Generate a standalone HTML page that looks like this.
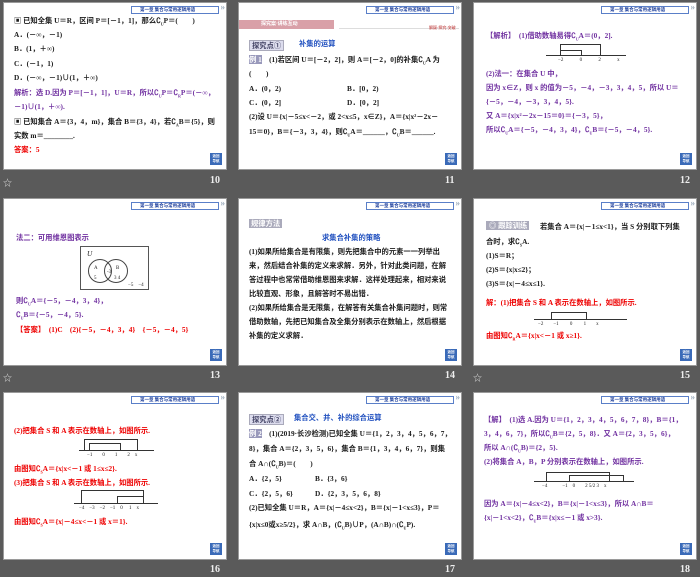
<!DOCTYPE html>
<html><head><meta charset="utf-8">
<style>
*{margin:0;padding:0;box-sizing:border-box}
body{width:700px;height:577px;background:#5a5a5a;position:relative;overflow:hidden;font-family:"Liberation Serif","Noto Sans CJK SC",serif}
.s{position:absolute;width:224px;height:168px;background:#fff;border:1px solid #9a9a9a;overflow:hidden}
.s div{position:absolute;white-space:nowrap;font-size:7.3px;font-weight:bold;color:#1a1a1a;line-height:9px}
.s sub{font-size:4px;line-height:0}
.hd{right:7px;top:3px;width:88px;height:8px;border:1px solid #5a7fc8;background:#fff;font-size:4.5px!important;color:#1a3c9a!important;line-height:6px!important;padding-left:8px}
.hd:after{content:"»";position:absolute;right:-7px;top:-3px;color:#9ab;font-size:9px}
.bt{right:4px;bottom:4px;width:12px;height:12px;background:#3a6ab8;color:#fff!important;font-size:3.5px!important;line-height:5px!important;text-align:center;padding-top:1px}
.p{color:#7030a0!important}.r{color:#e00!important}.b{color:#1f4fbf!important}
.n{position:absolute;color:#eee;font-weight:bold;font-size:10px;font-family:"Liberation Serif",serif}
.st{position:absolute;color:#ddd;font-size:9px}
.ax{position:absolute;border-top:1px solid #333}
.bx{position:absolute;border:1px solid #333;border-bottom:none}
.sm{font-size:5px!important;font-weight:normal!important}
</style></head><body>

<!-- slide 10 -->
<div class="s" style="left:3px;top:2px">
<div class="hd">第一章 集合与常用逻辑用语</div>
<div style="left:10px;top:13px">▣ 已知全集 U＝R，区间 P＝[－1，1]，那么∁<sub>U</sub>P＝(　　)</div>
<div style="left:10px;top:27px">A．(－∞，－1)</div>
<div style="left:10px;top:41px">B．(1，＋∞)</div>
<div style="left:10px;top:56px">C．(－1，1)</div>
<div style="left:10px;top:70px">D．(－∞，－1)∪(1，＋∞)</div>
<div class="p" style="left:10px;top:85px">解析：选 D.因为 P＝[－1，1]，U＝R，所以∁<sub>U</sub>P＝∁<sub>R</sub>P＝(－∞，</div>
<div class="p" style="left:10px;top:99px">－1)∪(1，＋∞).</div>
<div style="left:10px;top:114px">▣ 已知集合 A＝{3，4，m}，集合 B＝{3，4}，若∁<sub>A</sub>B＝{5}，则</div>
<div style="left:10px;top:128px">实数 m＝________.</div>
<div class="r" style="left:10px;top:142px">答案：5</div>
<div class="bt">返回<br>导航</div>
</div>
<span class="st" style="left:3px;top:176px">☆</span><span class="n" style="left:210px;top:175px">10</span>

<!-- slide 11 -->
<div class="s" style="left:238px;top:2px">
<div class="hd">第一章 集合与常用逻辑用语</div>
<div style="left:0;top:17px;width:95px;height:9px;background:#d9a0a8;color:#fff;padding-left:22px;font-size:5px;line-height:9px">探究案·讲练互动</div>
<div style="left:100px;top:25px;width:120px;border-top:1px solid #ddd;height:1px"></div>
<div style="left:190px;top:20px;font-size:4px;color:#c66">解疑·探究·突破</div>
<div style="left:10px;top:37px;background:#dde;padding:0 2px;border:1px solid #aab;color:#446">探究点①</div>
<div class="b" style="left:60px;top:36px">补集的运算</div>
<div style="left:10px;top:52px"><span style="background:#99b;color:#fff">例 1</span>　(1)若区间 U＝[－2，2]，则 A＝[－2，0]的补集∁<sub>U</sub>A 为</div>
<div style="left:10px;top:66px">(　　)</div>
<div style="left:10px;top:81px">A．(0，2)</div><div style="left:108px;top:81px">B．[0，2)</div>
<div style="left:10px;top:95px">C．(0，2]</div><div style="left:108px;top:95px">D．[0，2]</div>
<div style="left:10px;top:109px">(2)设 U＝{x|－5≤x&lt;－2，或 2&lt;x≤5，x∈Z}，A＝{x|x²－2x－</div>
<div style="left:10px;top:124px">15＝0}，B＝{－3，3，4}，则∁<sub>U</sub>A＝______，∁<sub>U</sub>B＝______.</div>
<div class="bt">返回<br>导航</div>
</div>
<span class="n" style="left:445px;top:175px">11</span>

<!-- slide 12 -->
<div class="s" style="left:473px;top:2px">
<div class="hd">第一章 集合与常用逻辑用语</div>
<div class="p" style="left:12px;top:28px">【解析】　(1)借助数轴易得∁<sub>U</sub>A＝(0，2].</div>
<div class="bx" style="left:86px;top:41px;width:41px;height:11px"></div>
<div class="bx" style="left:86px;top:47px;width:22px;height:5px"></div>
<div class="ax" style="left:72px;top:52px;width:80px"></div>
<div class="sm" style="left:84px;top:53px">−2　　　 0　　　 2　　　 x</div>
<div class="p" style="left:12px;top:66px">(2)法一：在集合 U 中，</div>
<div class="p" style="left:12px;top:80px">因为 x∈Z，则 x 的值为－5，－4，－3，3，4，5，所以 U＝</div>
<div class="p" style="left:12px;top:94px">{－5，－4，－3，3，4，5}.</div>
<div class="p" style="left:12px;top:108px">又 A＝{x|x²－2x－15＝0}＝{－3，5}，</div>
<div class="p" style="left:12px;top:122px">所以∁<sub>U</sub>A＝{－5，－4，3，4}，∁<sub>U</sub>B＝{－5，－4，5}.</div>
<div class="bt">返回<br>导航</div>
</div>
<span class="n" style="left:680px;top:175px">12</span>

<!-- slide 13 -->
<div class="s" style="left:3px;top:198px">
<div class="hd">第一章 集合与常用逻辑用语</div>
<div class="p" style="left:12px;top:34px">法二：可用维恩图表示</div>
<div style="left:76px;top:47px;width:69px;height:44px;border:1px solid #555;background:#fff"></div>
<div style="left:83px;top:50px;font-style:italic;font-weight:normal">U</div>
<div style="left:84px;top:60px;width:24px;height:24px;border:1px solid #444;border-radius:50%"></div>
<div style="left:100px;top:60px;width:24px;height:24px;border:1px solid #444;border-radius:50%"></div>
<div class="sm" style="left:90px;top:65px">A</div><div class="sm" style="left:112px;top:65px">B</div>
<div class="sm" style="left:90px;top:75px">5</div><div class="sm" style="left:103px;top:69px">-3</div><div class="sm" style="left:110px;top:75px">3 4</div>
<div class="sm" style="left:124px;top:82px">−5　−4</div>
<div class="p" style="left:12px;top:97px">则∁<sub>U</sub>A＝{－5，－4，3，4}，</div>
<div class="p" style="left:12px;top:111px">∁<sub>U</sub>B＝{－5，－4，5}.</div>
<div class="r" style="left:12px;top:126px">【答案】　(1)C　(2){－5，－4，3，4}　{－5，－4，5}</div>
<div class="bt">返回<br>导航</div>
</div>
<span class="st" style="left:3px;top:371px">☆</span><span class="n" style="left:210px;top:370px">13</span>

<!-- slide 14 -->
<div class="s" style="left:238px;top:198px">
<div class="hd">第一章 集合与常用逻辑用语</div>
<div style="left:10px;top:20px;background:#aab;color:#fff;padding:0 2px">规律方法</div>
<div class="b" style="left:83px;top:34px">求集合补集的策略</div>
<div style="left:10px;top:48px">(1)如果所给集合是有限集，则先把集合中的元素一一列举出</div>
<div style="left:10px;top:62px">来，然后结合补集的定义来求解．另外，针对此类问题，在解</div>
<div style="left:10px;top:76px">答过程中也常常借助维恩图来求解．这样处理起来，相对来说</div>
<div style="left:10px;top:90px">比较直观、形象，且解答时不易出错．</div>
<div style="left:10px;top:104px">(2)如果所给集合是无限集，在解答有关集合补集问题时，则常</div>
<div style="left:10px;top:118px">借助数轴，先把已知集合及全集分别表示在数轴上，然后根据</div>
<div style="left:10px;top:132px">补集的定义求解．</div>
<div class="bt">返回<br>导航</div>
</div>
<span class="n" style="left:445px;top:370px">14</span>

<!-- slide 15 -->
<div class="s" style="left:473px;top:198px">
<div class="hd">第一章 集合与常用逻辑用语</div>
<div style="left:12px;top:22px;background:#aab;color:#fff;padding:0 3px;width:43px">◎ 跟踪训练</div>
<div style="left:66px;top:23px">若集合 A＝{x|－1≤x&lt;1}，当 S 分别取下列集</div>
<div style="left:12px;top:38px">合时，求∁<sub>S</sub>A.</div>
<div style="left:12px;top:52px">(1)S＝R；</div>
<div style="left:12px;top:66px">(2)S＝{x|x≤2}；</div>
<div style="left:12px;top:80px">(3)S＝{x|－4≤x≤1}.</div>
<div class="r" style="left:12px;top:99px">解：(1)把集合 S 和 A 表示在数轴上，如图所示.</div>
<div class="bx" style="left:77px;top:113px;width:36px;height:7px"></div>
<div class="ax" style="left:60px;top:120px;width:93px"></div>
<div class="sm" style="left:64px;top:121px">−2　　−1　　 0　　 1　　x</div>
<div class="r" style="left:12px;top:132px">由图知∁<sub>R</sub>A＝{x|x&lt;－1 或 x≥1}.</div>
<div class="bt">返回<br>导航</div>
</div>
<span class="st" style="left:473px;top:371px">☆</span><span class="n" style="left:680px;top:370px">15</span>

<!-- slide 16 -->
<div class="s" style="left:3px;top:392px">
<div class="hd">第一章 集合与常用逻辑用语</div>
<div class="r" style="left:10px;top:33px">(2)把集合 S 和 A 表示在数轴上，如图所示.</div>
<div class="bx" style="left:80px;top:46px;width:54px;height:11px"></div>
<div class="bx" style="left:85px;top:50px;width:32px;height:7px"></div>
<div class="ax" style="left:75px;top:57px;width:75px"></div>
<div class="sm" style="left:83px;top:58px">−1　　0　　1　　2　x</div>
<div class="r" style="left:10px;top:71px">由图知∁<sub>S</sub>A＝{x|x&lt;－1 或 1≤x≤2}.</div>
<div class="r" style="left:10px;top:85px">(3)把集合 S 和 A 表示在数轴上，如图所示.</div>
<div class="bx" style="left:77px;top:97px;width:63px;height:13px"></div>
<div class="bx" style="left:113px;top:103px;width:27px;height:7px"></div>
<div class="ax" style="left:70px;top:110px;width:84px"></div>
<div class="sm" style="left:75px;top:111px">−4　−3　−2　−1　0　 1　x</div>
<div class="r" style="left:10px;top:124px">由图知∁<sub>S</sub>A＝{x|－4≤x&lt;－1 或 x＝1}.</div>
<div class="bt">返回<br>导航</div>
</div>
<span class="n" style="left:210px;top:564px">16</span>

<!-- slide 17 -->
<div class="s" style="left:238px;top:392px">
<div class="hd">第一章 集合与常用逻辑用语</div>
<div style="left:10px;top:21px;background:#dde;padding:0 2px;border:1px solid #aab;color:#446">探究点②</div>
<div class="b" style="left:55px;top:20px">集合交、并、补的综合运算</div>
<div style="left:10px;top:36px"><span style="background:#99b;color:#fff">例 2</span>　(1)(2019·长沙检测)已知全集 U＝{1，2，3，4，5，6，7，</div>
<div style="left:10px;top:51px">8}，集合 A＝{2，3，5，6}，集合 B＝{1，3，4，6，7}，则集</div>
<div style="left:10px;top:66px">合 A∩(∁<sub>U</sub>B)＝(　　)</div>
<div style="left:10px;top:81px">A．{2，5}</div><div style="left:76px;top:81px">B．{3，6}</div>
<div style="left:10px;top:96px">C．{2，5，6}</div><div style="left:76px;top:96px">D．{2，3，5，6，8}</div>
<div style="left:10px;top:110px">(2)已知全集 U＝R，A＝{x|－4≤x&lt;2}，B＝{x|－1&lt;x≤3}，P＝</div>
<div style="left:10px;top:127px">{x|x≤0或x≥5/2}，求 A∩B，(∁<sub>U</sub>B)∪P，(A∩B)∩(∁<sub>U</sub>P).</div>
<div class="bt">返回<br>导航</div>
</div>
<span class="n" style="left:445px;top:564px">17</span>

<!-- slide 18 -->
<div class="s" style="left:473px;top:392px">
<div class="hd">第一章 集合与常用逻辑用语</div>
<div class="p" style="left:10px;top:22px">【解】　(1)选 A.因为 U＝{1，2，3，4，5，6，7，8}，B＝{1，</div>
<div class="p" style="left:10px;top:36px">3，4，6，7}，所以∁<sub>U</sub>B＝{2，5，8}．又 A＝{2，3，5，6}，</div>
<div class="p" style="left:10px;top:50px">所以 A∩(∁<sub>U</sub>B)＝{2，5}.</div>
<div class="p" style="left:10px;top:64px">(2)将集合 A，B，P 分别表示在数轴上，如图所示.</div>
<div class="bx" style="left:72px;top:79px;width:64px;height:9px"></div>
<div class="bx" style="left:95px;top:82px;width:55px;height:6px"></div>
<div class="ax" style="left:60px;top:88px;width:100px"></div>
<div class="sm" style="left:68px;top:89px">−4　　　−1　0　　2 5/2 3　x</div>
<div class="p" style="left:10px;top:106px">因为 A＝{x|－4≤x&lt;2}，B＝{x|－1&lt;x≤3}，所以 A∩B＝</div>
<div class="p" style="left:10px;top:120px">{x|－1&lt;x&lt;2}，∁<sub>U</sub>B＝{x|x≤－1 或 x&gt;3}.</div>
<div class="bt">返回<br>导航</div>
</div>
<span class="n" style="left:680px;top:564px">18</span>

</body></html>
